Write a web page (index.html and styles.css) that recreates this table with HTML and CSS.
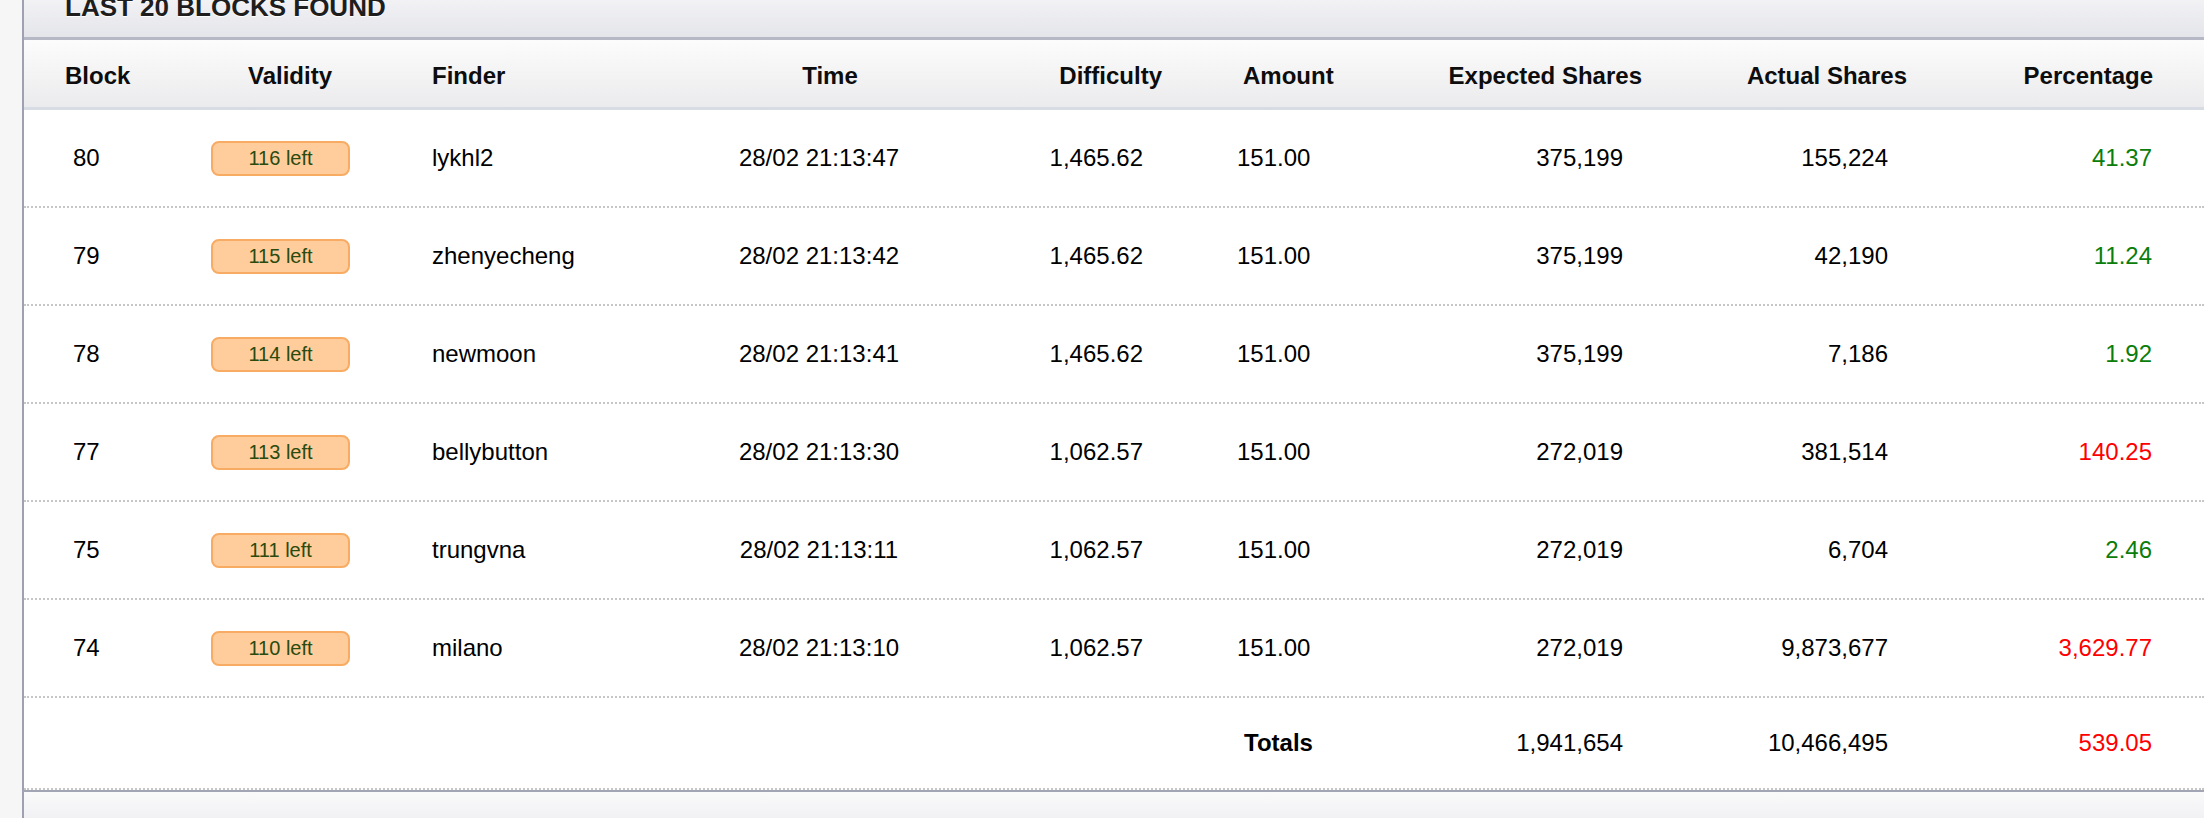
FILE: index.html
```html
<!DOCTYPE html>
<html>
<head>
<meta charset="utf-8">
<link rel="stylesheet" href="styles.css">
</head>
<body>
<div class="page">
  <section class="panel">
    <div class="titlebar"><h2 class="title">Last 20 Blocks Found</h2></div>
    <div class="grid head">
      <div class="cell c-block">Block</div>
      <div class="cell c-valid">Validity</div>
      <div class="cell c-finder">Finder</div>
      <div class="cell c-time">Time</div>
      <div class="cell c-diff">Difficulty</div>
      <div class="cell c-amount">Amount</div>
      <div class="cell c-exp">Expected Shares</div>
      <div class="cell c-act">Actual Shares</div>
      <div class="cell c-pct">Percentage</div>
    </div>
    <div class="grid row">
      <div class="cell c-block">80</div>
      <div class="cell c-valid"><span class="badge">116 left</span></div>
      <div class="cell c-finder">lykhl2</div>
      <div class="cell c-time">28/02 21:13:47</div>
      <div class="cell c-diff">1,465.62</div>
      <div class="cell c-amount">151.00</div>
      <div class="cell c-exp">375,199</div>
      <div class="cell c-act">155,224</div>
      <div class="cell c-pct good">41.37</div>
    </div>
    <div class="grid row">
      <div class="cell c-block">79</div>
      <div class="cell c-valid"><span class="badge">115 left</span></div>
      <div class="cell c-finder">zhenyecheng</div>
      <div class="cell c-time">28/02 21:13:42</div>
      <div class="cell c-diff">1,465.62</div>
      <div class="cell c-amount">151.00</div>
      <div class="cell c-exp">375,199</div>
      <div class="cell c-act">42,190</div>
      <div class="cell c-pct good">11.24</div>
    </div>
    <div class="grid row">
      <div class="cell c-block">78</div>
      <div class="cell c-valid"><span class="badge">114 left</span></div>
      <div class="cell c-finder">newmoon</div>
      <div class="cell c-time">28/02 21:13:41</div>
      <div class="cell c-diff">1,465.62</div>
      <div class="cell c-amount">151.00</div>
      <div class="cell c-exp">375,199</div>
      <div class="cell c-act">7,186</div>
      <div class="cell c-pct good">1.92</div>
    </div>
    <div class="grid row">
      <div class="cell c-block">77</div>
      <div class="cell c-valid"><span class="badge">113 left</span></div>
      <div class="cell c-finder">bellybutton</div>
      <div class="cell c-time">28/02 21:13:30</div>
      <div class="cell c-diff">1,062.57</div>
      <div class="cell c-amount">151.00</div>
      <div class="cell c-exp">272,019</div>
      <div class="cell c-act">381,514</div>
      <div class="cell c-pct bad">140.25</div>
    </div>
    <div class="grid row">
      <div class="cell c-block">75</div>
      <div class="cell c-valid"><span class="badge">111 left</span></div>
      <div class="cell c-finder">trungvna</div>
      <div class="cell c-time">28/02 21:13:11</div>
      <div class="cell c-diff">1,062.57</div>
      <div class="cell c-amount">151.00</div>
      <div class="cell c-exp">272,019</div>
      <div class="cell c-act">6,704</div>
      <div class="cell c-pct good">2.46</div>
    </div>
    <div class="grid row">
      <div class="cell c-block">74</div>
      <div class="cell c-valid"><span class="badge">110 left</span></div>
      <div class="cell c-finder">milano</div>
      <div class="cell c-time">28/02 21:13:10</div>
      <div class="cell c-diff">1,062.57</div>
      <div class="cell c-amount">151.00</div>
      <div class="cell c-exp">272,019</div>
      <div class="cell c-act">9,873,677</div>
      <div class="cell c-pct bad">3,629.77</div>
    </div>
    <div class="grid row totals">
      <div class="cell c-block"></div>
      <div class="cell c-valid"></div>
      <div class="cell c-finder"></div>
      <div class="cell c-time"></div>
      <div class="cell c-diff"></div>
      <div class="cell c-amount total-label">Totals</div>
      <div class="cell c-exp">1,941,654</div>
      <div class="cell c-act">10,466,495</div>
      <div class="cell c-pct bad">539.05</div>
    </div>
  </section>
  <div class="next-panel"></div>
</div>
</body>
</html>
```

FILE: styles.css
```css
html, body {
  margin: 0;
  padding: 0;
}
body {
  background: #f6f6f6;
  font-family: "Liberation Sans", Arial, Helvetica, sans-serif;
  color: #000;
  overflow: hidden;
}
.page {
  padding-left: 22px;
}
.panel {
  border-left: 2px solid #9ea1b1;
  border-bottom: 2px solid #a2a5b4;
  background: #fff;
}
.titlebar {
  height: 37px;
  border-bottom: 3px solid #b6b8c6;
  background: linear-gradient(#f2f2f5, #e4e5ea);
  padding-left: 41px;
  overflow: hidden;
}
.title {
  margin: 0;
  font-size: 26px;
  line-height: 14px;
  font-weight: bold;
  text-transform: uppercase;
  color: #1e1e1e;
  text-shadow: 0 1px 0 #fff;
}
.grid {
  display: grid;
  grid-template-columns: 156px 220px 300px 260px 220px 210px 280px 260px 1fr;
  align-items: center;
}
.cell {
  font-size: 24px;
  line-height: 28px;
  white-space: nowrap;
}
.head {
  height: 67px;
  border-bottom: 3px solid #d6dbe4;
  background: linear-gradient(#fcfcfc, #ebebed);
}
.head .cell {
  font-weight: bold;
  color: #0d0d0d;
  padding-top: 5px;
}
.row {
  height: 96px;
  border-bottom: 2px dotted #c6c6c6;
}
.row.totals {
  height: 90px;
}

/* header alignment */
.head .c-block { padding-left: 41px; }
.head .c-valid { text-align: center; }
.head .c-finder { padding-left: 32px; }
.head .c-time { text-align: center; }
.head .c-diff { text-align: right; padding-right: 18px; }
.head .c-amount { padding-left: 63px; }
.head .c-exp { text-align: right; padding-right: 28px; }
.head .c-act { text-align: right; padding-right: 23px; }
.head .c-pct { text-align: right; padding-right: 51px; }

/* data alignment */
.row .c-block { padding-left: 49px; }
.row .c-valid { padding-left: 31px; display: flex; }
.row .c-finder { padding-left: 32px; }
.row .c-time { text-align: center; padding-right: 22px; }
.row .c-diff { text-align: right; padding-right: 37px; }
.row .c-amount { padding-left: 57px; }
.row .c-exp { text-align: right; padding-right: 47px; }
.row .c-act { text-align: right; padding-right: 42px; }
.row .c-pct { text-align: right; padding-right: 52px; }
.row .total-label { font-weight: bold; padding-left: 64px; }

.badge {
  box-sizing: border-box;
  width: 139px;
  height: 35px;
  display: flex;
  align-items: center;
  justify-content: center;
  background: #fecd9b;
  border: 2px solid #f8ab63;
  border-radius: 8px;
  color: #2a4a0e;
  font-size: 20px;
  line-height: 1;
}
.good { color: #0a7d0a; }
.bad { color: #ff0000; }

.next-panel {
  height: 30px;
  border-left: 2px solid #9ea1b1;
  background: linear-gradient(#fafafb, #f0f0f3);
}
```
